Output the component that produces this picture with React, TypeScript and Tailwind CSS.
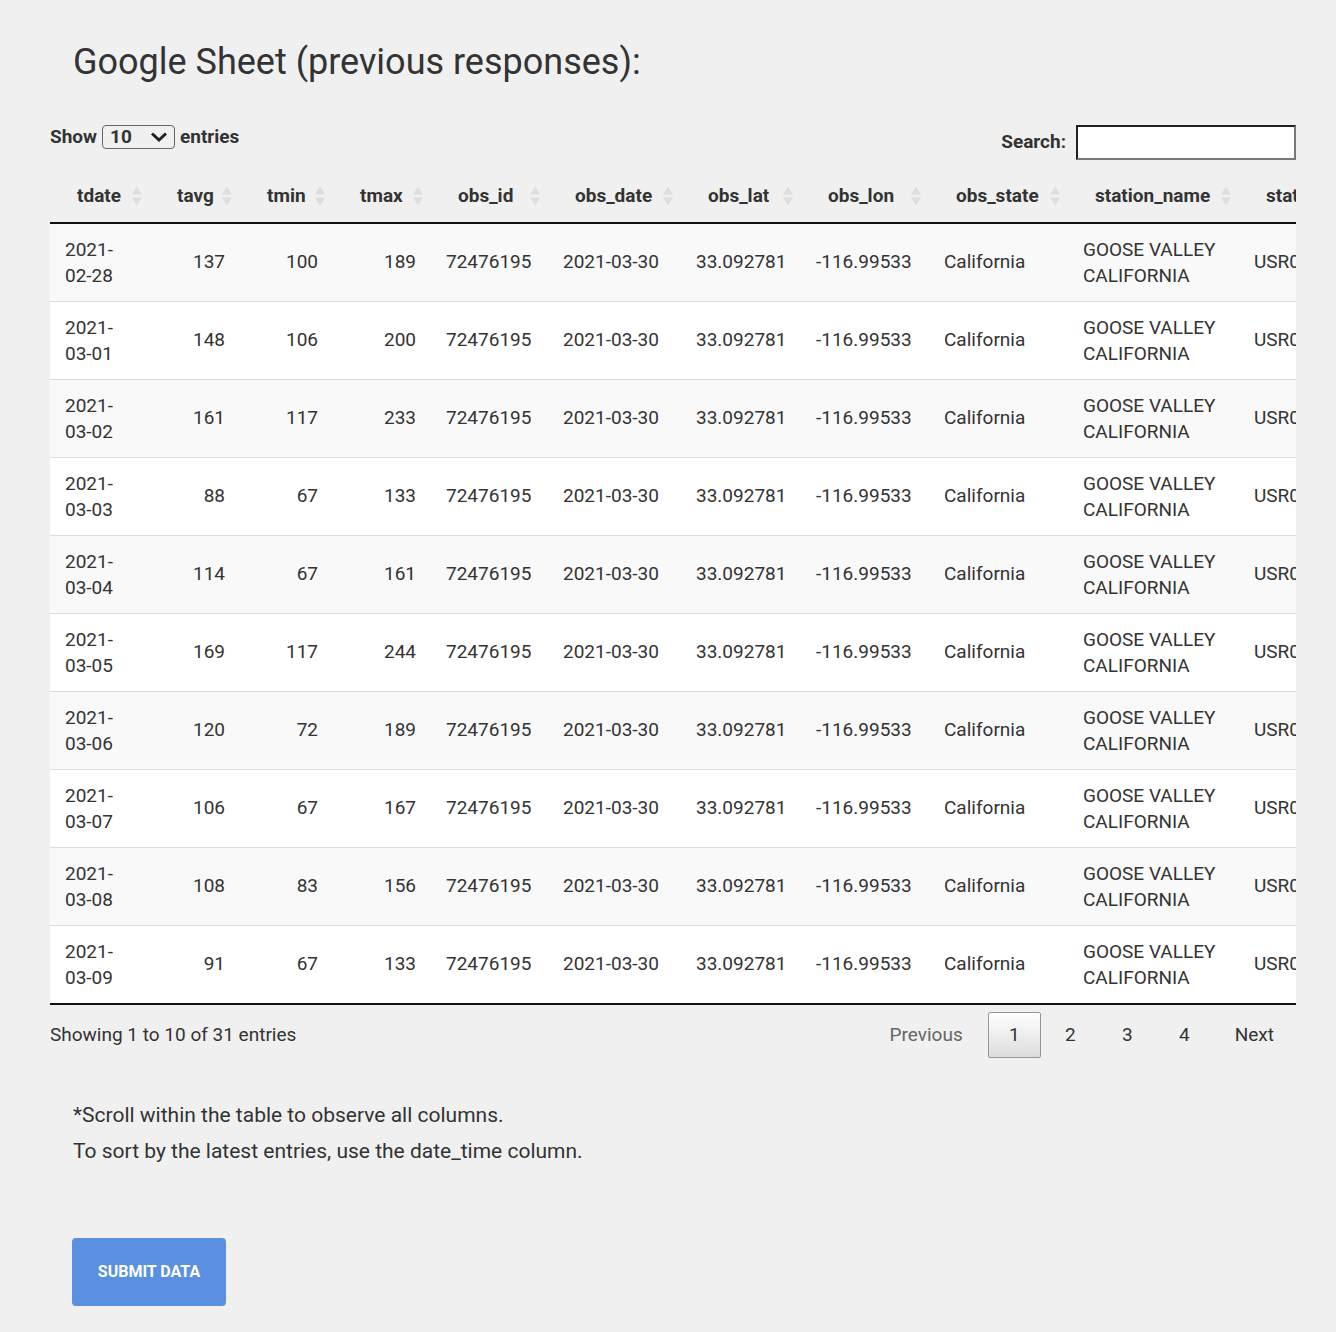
import React from "react";

type Col = { key: string; label: string; w: number; num?: boolean };

const cols: Col[] = [
  { key: "tdate", label: "tdate", w: 100 },
  { key: "tavg", label: "tavg", w: 90, num: true },
  { key: "tmin", label: "tmin", w: 93, num: true },
  { key: "tmax", label: "tmax", w: 98, num: true },
  { key: "obs_id", label: "obs_id", w: 117 },
  { key: "obs_date", label: "obs_date", w: 133 },
  { key: "obs_lat", label: "obs_lat", w: 120 },
  { key: "obs_lon", label: "obs_lon", w: 128 },
  { key: "obs_state", label: "obs_state", w: 139 },
  { key: "station_name", label: "station_name", w: 171 },
  { key: "station_id", label: "station_id", w: 180 },
];

const rows = [
  ["2021-02-28", 137, 100, 189],
  ["2021-03-01", 148, 106, 200],
  ["2021-03-02", 161, 117, 233],
  ["2021-03-03", 88, 67, 133],
  ["2021-03-04", 114, 67, 161],
  ["2021-03-05", 169, 117, 244],
  ["2021-03-06", 120, 72, 189],
  ["2021-03-07", 106, 67, 167],
  ["2021-03-08", 108, 83, 156],
  ["2021-03-09", 91, 67, 133],
];

function SortIcon() {
  return (
    <svg width="12" height="22" viewBox="0 0 12 22" className="absolute right-[7px] top-1/2 -translate-y-1/2">
      <polygon points="6,1.5 11,9.5 1,9.5" fill="#dedede" />
      <polygon points="1,12.5 11,12.5 6,20.5" fill="#dedede" />
    </svg>
  );
}

export default function App() {
  const totalW = cols.reduce((s, c) => s + c.w, 0);
  return (
    <div className="min-h-screen bg-[#f0f0f0] text-[#333] font-['Roboto',sans-serif]">
      <h1 className="pl-[73px] pt-[38px] text-[36px] leading-[48px] font-normal text-[#333]">
        Google Sheet (previous responses):
      </h1>

      <div className="ml-[50px] w-[1246px]">
        <div className="mt-[38px] flex justify-between h-[36px]">
          <div className="flex items-start gap-[5px] text-[19px] leading-[26px] font-bold">
            <span>Show</span>
            <div className="mt-[1px] flex items-center justify-between w-[73px] h-[24px] border border-[#666] rounded-[4px] bg-[#f0f0f0] pl-[7px] pr-[6px]">
              <span className="leading-[20px]">10</span>
              <svg width="18" height="12" viewBox="0 0 18 12">
                <path d="M2 2.5 L9 9 L16 2.5" stroke="#222" strokeWidth="3" fill="none" />
              </svg>
            </div>
            <span>entries</span>
          </div>
          <div className="flex items-center gap-[10px] text-[19px] font-bold h-[35px] pt-[1px]">
            <span>Search:</span>
            <div className="w-[220px] h-[35px] bg-white border-2 border-t-[#222] border-l-[#222] border-r-[#777] border-b-[#777]" />
          </div>
        </div>

        <div className="mt-[10px] overflow-hidden">
          <table className="table-fixed border-collapse text-[19px]" style={{ width: totalW }}>
            <colgroup>
              {cols.map((c) => (
                <col key={c.key} style={{ width: c.w }} />
              ))}
            </colgroup>
            <thead>
              <tr className="border-b-2 border-[#111]">
                {cols.map((c) => (
                  <th
                    key={c.key}
                    className="relative text-left font-bold pl-[27px] pr-[20px] py-[13px] leading-[26px] whitespace-nowrap"
                  >
                    {c.label}
                    <SortIcon />
                  </th>
                ))}
              </tr>
            </thead>
            <tbody>
              {rows.map((r, i) => (
                <tr
                  key={i}
                  className={`${i % 2 === 0 ? "bg-[#f9f9f9]" : "bg-white"} ${
                    i === rows.length - 1 ? "border-b-2 border-[#111]" : "border-b border-[#dddddd]"
                  }`}
                >
                  <td className="px-[15px] pt-[13px] pb-[12px] leading-[26px] align-middle">
                    {String(r[0]).slice(0, 5)}
                    <br />
                    {String(r[0]).slice(5)}
                  </td>
                  <td className="px-[15px] text-right align-middle">{r[1]}</td>
                  <td className="px-[15px] text-right align-middle">{r[2]}</td>
                  <td className="px-[15px] text-right align-middle">{r[3]}</td>
                  <td className="px-[15px] align-middle">72476195</td>
                  <td className="px-[15px] align-middle">2021-03-30</td>
                  <td className="px-[15px] align-middle">33.092781</td>
                  <td className="px-[15px] align-middle">-116.99533</td>
                  <td className="px-[15px] align-middle">California</td>
                  <td className="px-[15px] leading-[26px] align-middle">
                    GOOSE VALLEY
                    <br />
                    CALIFORNIA
                  </td>
                  <td className="px-[15px] align-middle whitespace-nowrap">USR0000CGOO</td>
                </tr>
              ))}
            </tbody>
          </table>
        </div>

        <div className="pt-[7px] flex items-center justify-between text-[19px]">
          <span>Showing 1 to 10 of 31 entries</span>
          <div className="flex items-center">
            <span className="h-[46px] pr-[25px] leading-[46px] text-[#666]">Previous</span>
            <span className="h-[46px] w-[53px] leading-[44px] text-center border border-[#979797] rounded-[2px] bg-gradient-to-b from-white to-[#dcdcdc]">
              1
            </span>
            <span className="ml-[2px] h-[46px] w-[55px] leading-[46px] text-center">2</span>
            <span className="ml-[2px] h-[46px] w-[55px] leading-[46px] text-center">3</span>
            <span className="ml-[2px] h-[46px] w-[55px] leading-[46px] text-center">4</span>
            <span className="ml-[2px] h-[46px] pl-[21px] pr-[22px] leading-[46px]">Next</span>
          </div>
        </div>
      </div>

      <div className="pl-[73px] mt-[39px] text-[21px] leading-[36px]">
        <p>*Scroll within the table to observe all columns.</p>
        <p>To sort by the latest entries, use the date_time column.</p>
      </div>

      <div className="pl-[72px] mt-[69px] pb-[26px]">
        <button className="w-[154px] h-[68px] rounded-[4px] bg-[#5b8fe0] text-white text-[16px] font-bold uppercase">
          Submit Data
        </button>
      </div>
    </div>
  );
}
